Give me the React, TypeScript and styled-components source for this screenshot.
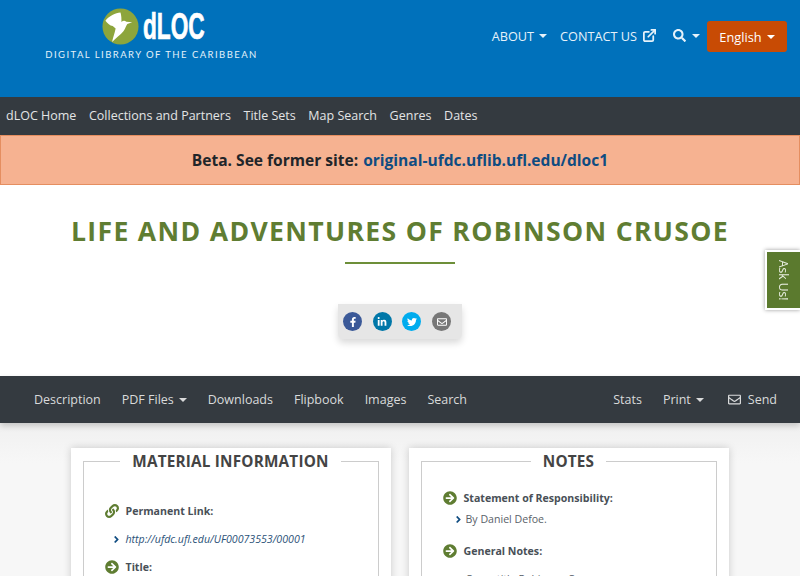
import React from 'react';
import styled, { createGlobalStyle } from 'styled-components';
import { FaArrowCircleRight, FaAngleRight, FaFacebookF, FaLink, FaLinkedinIn, FaRegEnvelope, FaSearch, FaTwitter } from 'react-icons/fa';
import { ExternalLink } from 'lucide-react';

const GlobalStyle = createGlobalStyle`
  html, body { margin: 0; padding: 0; height: 576px; overflow: hidden; background: #fff; }
  body { font-family: "Open Sans", "Liberation Sans", sans-serif; font-size: 12.5px; color: #495057; }
  a { color: inherit; text-decoration: none; }
`;

const Header = styled.header`
  height: 97px;
  background: #0071bb;
  display: flex;
  justify-content: space-between;
  align-items: flex-start;
  box-sizing: border-box;
  padding: 21px 13px 0 45px;
`;

const Brand = styled.a`
  width: 213px;
  display: flex;
  flex-direction: column;
  align-items: center;
  margin-top: -13px;
`;

const BrandTop = styled.div`
  display: flex;
  align-items: center;
  gap: 4px;
  height: 37px;
  margin-left: 2px;
`;

const BrandName = styled.span`
  font-family: "Liberation Sans", sans-serif;
  font-weight: 700;
  font-size: 36px;
  line-height: 37px;
  color: #fff;
  -webkit-text-stroke: 0.7px #fff;
  display: inline-block;
  transform: scaleX(0.63);
  transform-origin: left center;
  width: 61px;
`;

const BrandTag = styled.span`
  font-family: "Lato", "Open Sans", sans-serif;
  font-size: 9.5px;
  font-weight: 400;
  line-height: 12px;
  letter-spacing: 1.45px;
  color: #e4f1fa;
  white-space: nowrap;
  margin-top: 4px;
`;

const TopMenu = styled.nav`
  display: flex;
  align-items: flex-start;
`;

const TopLink = styled.a`
  display: flex;
  align-items: center;
  gap: 5px;
  height: 29px;
  font-size: 12.7px;
  color: #e6f2fa;
  margin-right: 13px;
  white-space: nowrap;
`;

const SearchLink = styled(TopLink)`
  margin: 0 7px 0 3px;
  gap: 6px;
`;

const Caret = styled.span<{ $gap?: number }>`
  display: inline-block;
  width: 0;
  height: 0;
  margin-left: ${({ $gap }) => $gap ?? 0}px;
  border-top: 4px solid currentColor;
  border-left: 4px solid transparent;
  border-right: 4px solid transparent;
`;

const LangButton = styled.button`
  height: 31px;
  width: 80px;
  padding: 0;
  border: 0;
  border-radius: 3px;
  background: #c84b04;
  color: #fff;
  font: 400 12.8px "Open Sans", sans-serif;
  display: flex;
  align-items: center;
  justify-content: center;
  gap: 2px;
`;

const MainNav = styled.nav`
  height: 38px;
  background: #343a40;
  display: flex;
  align-items: center;
  gap: 12.6px;
  padding: 0 0 1px 6px;
  box-sizing: border-box;
`;

const MainLink = styled.a`
  color: #e3e4e5;
  font-size: 12.5px;
  white-space: nowrap;
`;

const Banner = styled.div`
  height: 50px;
  box-sizing: border-box;
  background: #f6b291;
  border: 1px solid #e58e60;
  display: flex;
  align-items: center;
  justify-content: center;
  gap: 5px;
  font-size: 15.55px;
  font-weight: 700;
  color: #212529;
`;

const BannerLink = styled.a`
  color: #0f4c81;
`;

const Title = styled.h1`
  margin: 27px 0 0;
  text-align: center;
  font-size: 26.6px;
  line-height: 38px;
  font-weight: 700;
  letter-spacing: 1.33px;
  color: #5f7d32;
`;

const TitleRule = styled.div`
  width: 110px;
  height: 2px;
  margin: 12px auto 0;
  background: #6d8f39;
`;

const ShareBox = styled.div`
  width: 124px;
  height: 35px;
  margin: 40px auto 0;
  box-sizing: border-box;
  padding: 0 5px;
  display: flex;
  align-items: center;
  gap: 10.7px;
  background: #e6e6e6;
  border-radius: 0 0 5px 5px;
  box-shadow: 0 4px 7px rgba(0, 0, 0, 0.15);
`;

const ShareIcon = styled.a<{ $bg: string }>`
  width: 19px;
  height: 19px;
  border-radius: 50%;
  background: ${({ $bg }) => $bg};
  color: #fff;
  font-size: 10px;
  display: flex;
  align-items: center;
  justify-content: center;
`;

const AskUs = styled.a`
  position: fixed;
  right: 0;
  top: 250px;
  width: 35px;
  height: 60px;
  box-sizing: border-box;
  background: #5b7a2e;
  border: 2px solid #fff;
  border-right: 0;
  box-shadow: 0 0 4px rgba(0, 0, 0, 0.4);
  color: #e8eee0;
  font-size: 12px;
  writing-mode: vertical-rl;
  display: flex;
  align-items: center;
  justify-content: center;
`;

const Toolbar = styled.nav`
  height: 47px;
  margin-top: 37px;
  background: #343a40;
  box-shadow: 0 3px 6px rgba(0, 0, 0, 0.18);
  display: flex;
  align-items: center;
  justify-content: space-between;
  box-sizing: border-box;
  padding: 0 23px 0 34px;
  position: relative;
`;

const ToolGroup = styled.div`
  display: flex;
  align-items: center;
  gap: 21px;
`;

const ToolLink = styled.a`
  display: flex;
  align-items: center;
  color: #d9dadb;
  font-size: 12.5px;
  white-space: nowrap;
`;

const SendIcon = styled(FaRegEnvelope)`
  font-size: 13px;
  margin-right: 7px;
  margin-left: 3px;
`;

const Content = styled.main`
  display: grid;
  grid-template-columns: 320px 320px;
  gap: 18px;
  justify-content: center;
  padding: 25px 0 0;
  margin-left: -1px;
  background: linear-gradient(#f0f0f0, #f7f7f7 40px);
  height: 200px;
`;

const Card = styled.section`
  background: #fff;
  box-shadow: 0 0 8px rgba(0, 0, 0, 0.18);
  padding: 2px 12px 12px;
`;

const CardFrame = styled.fieldset`
  margin: 0;
  padding: 0 21px;
  border: 1px solid #ccc;
  min-height: 300px;
`;

const CardTitle = styled.legend`
  margin: 0 auto;
  padding: 0 12px;
  font-size: 15.3px;
  line-height: 22px;
  font-weight: 700;
  letter-spacing: 0.2px;
  color: #444;
  text-align: center;
`;

const List = styled.dl<{ $top: number }>`
  margin: ${({ $top }) => $top}px 0 0;
`;

const Term = styled.dt`
  display: flex;
  align-items: center;
  gap: 7px;
  font-size: 10.6px;
  line-height: 20px;
  font-weight: 700;
  color: #495057;
`;

const LinkIcon = styled(FaLink)`
  color: #5f7d32;
  font-size: 14px;
`;

const ArrowIcon = styled(FaArrowCircleRight)`
  color: #5f7d32;
  font-size: 14px;
`;

const Value = styled.dd<{ $after: number; $before: number; $indent: number; $gap: number }>`
  display: flex;
  align-items: center;
  gap: ${({ $gap }) => $gap}px;
  margin: ${({ $before }) => $before}px 0 ${({ $after }) => $after}px ${({ $indent }) => $indent}px;
  font-size: 10.6px;
  line-height: 18px;
  color: #5a6269;
`;

const Angle = styled(FaAngleRight)`
  color: #0f4c81;
  font-size: 11px;
  flex: none;
`;

const ValueLink = styled.a`
  color: #2b5278;
  font-style: italic;
`;

const Logo = () => (
  <svg width="37" height="37" viewBox="0 0 38 38">
    <circle cx="19" cy="19" r="18.5" fill="#8da53c" />
    <path
      fill="#fff"
      d="M19 4.5C14 5 7 8 3.5 13c2.500 3 4.500 5 7.500 5.500l3 2.500c-1 5-3 10-3.600 14C14 31 19 28 22 24c2-3 3-6 4-7.500l5-1.800-6-.7c-2-1.500-3.500-1-5 .5 0-3.500 0-6.500-1-10z"
    />
  </svg>
);

const App: React.FC = () => (
  <>
    <GlobalStyle />
    <Header>
      <Brand href="#">
        <BrandTop>
          <Logo />
          <BrandName>dLOC</BrandName>
        </BrandTop>
        <BrandTag>DIGITAL LIBRARY OF THE CARIBBEAN</BrandTag>
      </Brand>
      <TopMenu>
        <TopLink href="#">ABOUT<Caret /></TopLink>
        <TopLink href="#">CONTACT US<ExternalLink size={15} strokeWidth={2.8} /></TopLink>
        <SearchLink href="#"><FaSearch size={13} /><Caret /></SearchLink>
        <LangButton>English<Caret $gap={3} /></LangButton>
      </TopMenu>
    </Header>
    <MainNav>
      <MainLink href="#">dLOC Home</MainLink>
      <MainLink href="#">Collections and Partners</MainLink>
      <MainLink href="#">Title Sets</MainLink>
      <MainLink href="#">Map Search</MainLink>
      <MainLink href="#">Genres</MainLink>
      <MainLink href="#">Dates</MainLink>
    </MainNav>
    <Banner>
      Beta. See former site:
      <BannerLink href="#">original-ufdc.uflib.ufl.edu/dloc1</BannerLink>
    </Banner>
    <Title>LIFE AND ADVENTURES OF ROBINSON CRUSOE</Title>
    <TitleRule />
    <ShareBox>
      <ShareIcon $bg="#3b5998" href="#"><FaFacebookF /></ShareIcon>
      <ShareIcon $bg="#0077a8" href="#"><FaLinkedinIn /></ShareIcon>
      <ShareIcon $bg="#00acee" href="#"><FaTwitter /></ShareIcon>
      <ShareIcon $bg="#777" href="#"><FaRegEnvelope /></ShareIcon>
    </ShareBox>
    <AskUs href="#">Ask Us!</AskUs>
    <Toolbar>
      <ToolGroup>
        <ToolLink href="#">Description</ToolLink>
        <ToolLink href="#">PDF Files<Caret $gap={5} /></ToolLink>
        <ToolLink href="#">Downloads</ToolLink>
        <ToolLink href="#">Flipbook</ToolLink>
        <ToolLink href="#">Images</ToolLink>
        <ToolLink href="#">Search</ToolLink>
      </ToolGroup>
      <ToolGroup>
        <ToolLink href="#">Stats</ToolLink>
        <ToolLink href="#">Print<Caret $gap={5} /></ToolLink>
        <ToolLink href="#"><SendIcon />Send</ToolLink>
      </ToolGroup>
    </Toolbar>
    <Content>
      <Card>
        <CardFrame>
          <CardTitle>MATERIAL INFORMATION</CardTitle>
          <List $top={29}>
            <Term><LinkIcon />Permanent Link:</Term>
            <Value $before={9} $after={9} $indent={6} $gap={4}>
              <Angle />
              <ValueLink href="#">http://ufdc.ufl.edu/UF00073553/00001</ValueLink>
            </Value>
            <Term><ArrowIcon />Title:</Term>
          </List>
        </CardFrame>
      </Card>
      <Card>
        <CardFrame>
          <CardTitle>NOTES</CardTitle>
          <List $top={16}>
            <Term><ArrowIcon />Statement of Responsibility:</Term>
            <Value $before={2} $after={13} $indent={10} $gap={2}>
              <Angle />
              By Daniel Defoe.
            </Value>
            <Term><ArrowIcon />General Notes:</Term>
            <Value $before={9} $after={0} $indent={10} $gap={2}>
              <Angle />
              Cover title Robinson Crusoe.
            </Value>
          </List>
        </CardFrame>
      </Card>
    </Content>
  </>
);

export default App;
